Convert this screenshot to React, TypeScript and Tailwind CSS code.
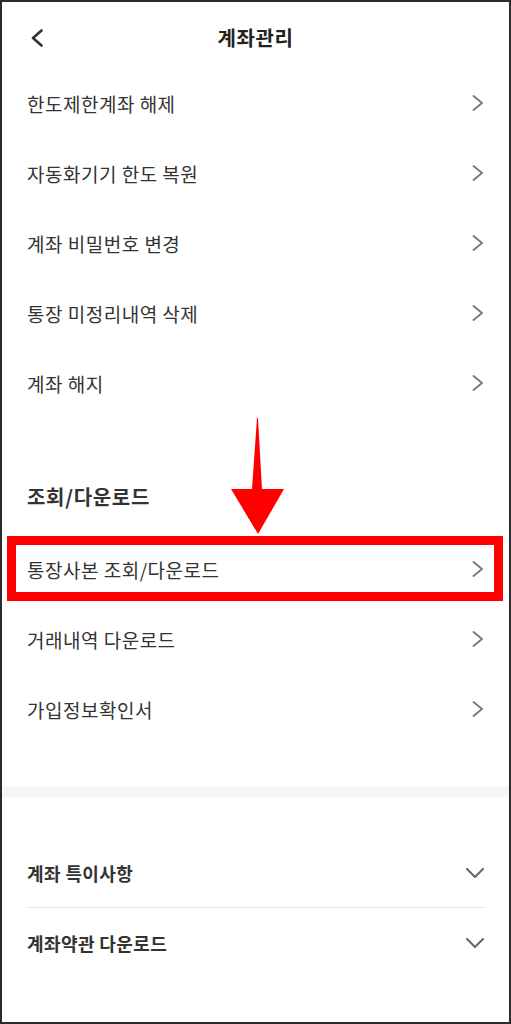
import React from 'react';

const font = { fontFamily: '"Noto Sans CJK KR", "Noto Sans", sans-serif' };

function ChevronRight() {
  return (
    <svg width="12" height="16" viewBox="0 0 12 16" fill="none">
      <path d="M1.5 1 L10 8 L1.5 15" stroke="#777" strokeWidth="1.8" strokeLinecap="round" strokeLinejoin="round" />
    </svg>
  );
}

function ChevronDown() {
  return (
    <svg width="18" height="10" viewBox="0 0 18 10" fill="none">
      <path d="M1 1 L9 9 L17 1" stroke="#666" strokeWidth="2" strokeLinecap="round" strokeLinejoin="round" />
    </svg>
  );
}

const accountItems = ['한도제한계좌 해제', '자동화기기 한도 복원', '계좌 비밀번호 변경', '통장 미정리내역 삭제', '계좌 해지'];
const downloadItems = ['통장사본 조회/다운로드', '거래내역 다운로드', '가입정보확인서'];

function Row({ label }: { label: string }) {
  return (
    <div className="h-[70px] px-[25px] flex items-center justify-between">
      <span className="text-[19px] tracking-[0.5px] text-[#333] leading-none">{label}</span>
      <ChevronRight />
    </div>
  );
}

export default function App() {
  return (
    <div style={font} className="relative w-[511px] h-[1024px] overflow-hidden bg-white border-2 border-[#2b2b2b]">
      {/* header */}
      <div className="h-[66px] pt-[6px] pl-[28px] pr-[28px] flex items-center">
        <svg width="14" height="18" viewBox="0 0 14 18" fill="none">
          <path d="M11.5 1.5 L3 9 L11.5 16.5" stroke="#333" strokeWidth="2.6" strokeLinecap="round" strokeLinejoin="round" />
        </svg>
        <h1 className="flex-1 text-center text-[20px] tracking-[0.6px] font-semibold text-[#222] leading-none">계좌관리</h1>
        <div className="w-[14px]" />
      </div>

      {accountItems.map((t) => (
        <Row key={t} label={t} />
      ))}

      {/* 조회/다운로드 */}
      <div className="pt-[66px] pb-[24px] px-[25px]">
        <h2 className="text-[20px] tracking-[0.7px] font-semibold text-[#333] leading-[26px]">조회/다운로드</h2>
      </div>
      {downloadItems.map((t) => (
        <Row key={t} label={t} />
      ))}

      <div className="mt-[42px] h-[11px] bg-[#f6f6f6]" />

      <div className="pt-[41px] px-[25px]">
        <div className="h-[70px] flex items-center justify-between border-b border-[#e6e6e6]">
          <span className="text-[18px] tracking-[0.4px] font-semibold text-[#333] leading-none">계좌 특이사항</span>
          <ChevronDown />
        </div>
        <div className="h-[70px] flex items-center justify-between">
          <span className="text-[18px] tracking-[0.4px] font-semibold text-[#333] leading-none">계좌약관 다운로드</span>
          <ChevronDown />
        </div>
      </div>

      {/* annotation overlay */}
      <svg className="absolute left-[223px] top-[412px]" width="64" height="124" viewBox="0 0 64 124">
        <polygon points="32,4 27,75 6,75 33,120 59,75 37,75 33,4" fill="#ff0000" />
      </svg>
      <div className="absolute left-[5px] top-[534px] w-[496px] h-[65px] border-[9px] border-[#ff0000]" />
    </div>
  );
}
